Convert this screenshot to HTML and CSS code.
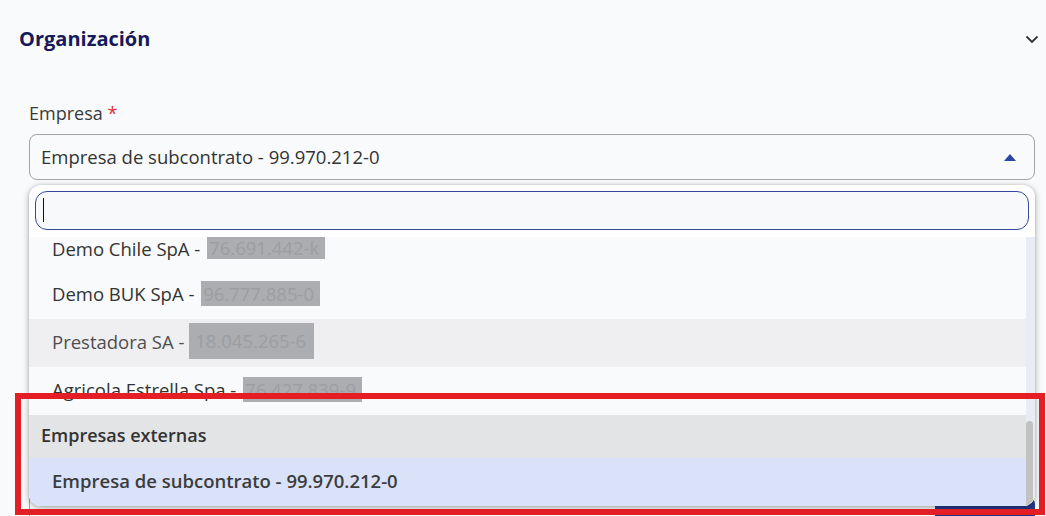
FILE: index.html
```html
<!DOCTYPE html>
<html lang="es">
<head>
  <meta charset="UTF-8" />
  <meta name="viewport" content="width=device-width, initial-scale=1.0" />
  <title>Organización</title>
  <link rel="stylesheet" href="styles.css">
</head>
<body>

  <div class="page">

    <!-- Sección Organización -->
    <section class="section">
      <div class="section-head">
        <h2>Organización</h2>
        <svg class="chevron" width="14" height="9" viewBox="0 0 14 9"><path d="M1.5 1.5 7 7l5.5-5.5" fill="none" stroke="#333" stroke-width="1.8"/></svg>
      </div>

      <div class="field">
        <label class="field-label">Empresa <span class="req">*</span></label>
        <div class="select">
          <div class="select-control">
            <span>Empresa de subcontrato - 99.970.212-0</span>
            <svg class="caret" width="12" height="7" viewBox="0 0 12 7"><path d="M0 7 6 0l6 7z" fill="#2c46a3"/></svg>
          </div>

          <!-- menú abierto -->
          <div class="menu">
            <div class="menu-search">
              <input type="text" />
              <span class="cursor"></span>
            </div>
            <div class="menu-list">
              <div class="options">
                <div class="option first">Demo Chile SpA - <span class="rut">76.691.442-k</span></div>
                <div class="option">Demo BUK SpA - <span class="rut">96.777.885-0</span></div>
                <div class="option hover">Prestadora SA - <span class="rut tall">18.045.265-6</span></div>
                <div class="option">Agricola Estrella Spa - <span class="rut">76.427.839-9</span></div>
                <div class="group">Empresas externas</div>
                <div class="option selected">Empresa de subcontrato - 99.970.212-0</div>
              </div>
              <div class="scrollbar"><div class="thumb"></div></div>
            </div>
          </div>
        </div>
      </div>

      <div class="below">
        <div class="below-box"></div>
        <button class="btn-primary" aria-label="Guardar"></button>
      </div>
    </section>

    <div class="mark"></div>
  </div>

</body>
</html>
```

FILE: styles.css
```css
body { margin: 0; font-family: "Open Sans", "Noto Sans", sans-serif; background: #f9fafc; color: #333; overflow: hidden; }
.page { position: relative; height: 516px; overflow: hidden; }
.section { padding: 0 11px 0 19px; }
.section-head { display: flex; align-items: center; justify-content: space-between; height: 76px; }
.section-head h2 { margin: 0; font-size: 20px; font-weight: 700; color: #16195a; }
.chevron { margin-right: -4px; margin-top: 2px; }

.field { padding: 24px 0 0 10px; }
.field-label { display: block; font-size: 18px; color: #3a3a3a; margin-bottom: 8px; line-height: 26px; }
.req { color: #e0323a; }

.select { position: relative; }
.select-control { display: flex; align-items: center; justify-content: space-between; height: 42px; padding: 0 18px 2px 11px; border: 1px solid #a4a4a4; border-radius: 8px; font-size: 18.5px; color: #333; }
.caret { margin-top: 3px; }

.menu { position: absolute; top: 51px; left: 0; right: 0; z-index: 2; background: #fff; border-radius: 12px; box-shadow: 0 2px 7px rgba(0,0,0,0.3), 0 0 3px rgba(0,0,0,0.15); overflow: hidden; }
.menu-search { position: relative; padding: 6px 6px 7px 6px; }
.menu-search input { display: block; box-sizing: border-box; width: 100%; height: 39px; border: 1.5px solid #34499c; border-radius: 12px; background: #f8f9fb; outline: none; }
.cursor { position: absolute; left: 14px; top: 13px; width: 1px; height: 24px; background: #111; }

/* lista desplazada: la primera opción queda medio oculta */
.menu-list { display: flex; height: 269px; overflow: hidden; background: #f9fafc; }
.options { flex: 1; margin-top: -10px; }
.option { display: flex; align-items: center; box-sizing: border-box; height: 48px; padding: 0 0 4px 23px; font-size: 18.5px; color: #333; white-space: pre; }
.option.first { height: 44px; padding-bottom: 2px; }
.option.first .rut { line-height: 22px; }
.option.hover { background: #efeff1; color: #4e4e4e; }
.option.selected { background: #d9e2f8; font-weight: 600; color: #3c3c3c; }
.group { display: flex; align-items: center; box-sizing: border-box; height: 43px; padding: 0 0 3px 12px; background: #e3e4e6; font-size: 18px; font-weight: 600; color: #333; }

.rut { display: inline-block; background: #acadb0; color: #9d9ea1; padding: 0 6px 0 2px; line-height: 25px; margin-left: 2px; }
.rut.tall { line-height: 36px; padding: 0 8px 0 6px; margin-left: 0; }

.scrollbar { position: relative; width: 9px; background: #e9ebf5; }
.thumb { position: absolute; top: 184px; left: 0; width: 7px; height: 90px; background: #c2c2c2; border-radius: 4px 4px 0 0; }

.below { display: flex; justify-content: space-between; align-items: flex-start; margin: 318px 0 0 10px; }
.below-box { width: 300px; height: 20px; border-left: 1px solid #a4a4a4; }
.btn-primary { width: 100px; height: 20px; padding: 0; background: #26398c; border: none; border-radius: 6px 6px 0 0; }

.mark { position: absolute; left: 15px; top: 393px; width: 1018px; height: 110px; border: 6px solid #e31e24; z-index: 3; }
```
